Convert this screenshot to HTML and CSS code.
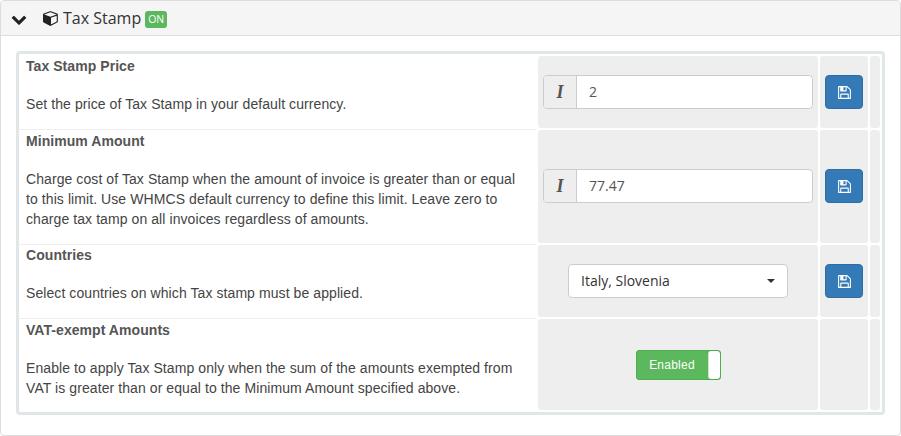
FILE: index.html
```html
<!DOCTYPE html>
<html lang="en">
<head>
<meta charset="utf-8">
<title>Tax Stamp</title>
<link rel="stylesheet" href="styles.css">
</head>
<body>
<section class="panel">
  <header class="panel-heading">
    <svg class="chevron" viewBox="0 0 1792 1792"><path d="M1683 808l-742 741q-19 19-45 19t-45-19l-742-741q-19-19-19-45.500t19-45.500l166-165q19-19 45-19t45 19l531 531 531-531q19-19 45-19t45 19l166 165q19 19 19 45.500t-19 45.500z"/></svg>
    <svg class="cube" viewBox="0 0 1792 1792"><path d="M896 1629l640-349v-636l-640 233v752zm-64-865l698-254-698-254-698 254zm832-252v768q0 35-18 65t-49 47l-704 384q-28 16-61 16t-61-16l-704-384q-31-17-49-47t-18-65v-768q0-40 23-73t61-47l704-256q22-8 44-8t44 8l704 256q38 14 61 47t23 73z"/></svg>
    <span class="panel-title">Tax Stamp</span>
    <span class="badge">ON</span>
  </header>
  <div class="panel-body">
    <div class="settings">
      <div class="info">
        <h4>Tax Stamp Price</h4>
        <p>Set the price of Tax Stamp in your default currency.</p>
      </div>
      <div class="cell">
        <div class="input-group"><span class="addon">I</span><span class="field">2</span></div>
      </div>
      <div class="cell">
        <button class="save" type="button"><svg class="save-icon" viewBox="0 0 1792 1792"><path d="M512 1536h768v-384h-768v384zm896 0h128v-896q0-14-10-38.500t-20-34.500l-281-281q-10-10-34-20t-39-10v416q0 40-28 68t-68 28h-576q-40 0-68-28t-28-68v-416h-128v1280h128v-416q0-40 28-68t68-28h832q40 0 68 28t28 68v416zm-384-928v-320q0-13-9.500-22.500t-22.500-9.500h-192q-13 0-22.500 9.500t-9.500 22.500v320q0 13 9.500 22.500t22.500 9.500h192q13 0 22.500-9.500t9.500-22.500zm640 32v928q0 40-28 68t-68 28h-1344q-40 0-68-28t-28-68v-1344q0-40 28-68t68-28h928q40 0 88 20t76 48l280 280q28 28 48 76t20 88z"/></svg></button>
      </div>
      <div class="cell"></div>

      <div class="info info-tall">
        <h4>Minimum Amount</h4>
        <p>Charge cost of Tax Stamp when the amount of invoice is greater than or equal to this limit. Use WHMCS default currency to define this limit. Leave zero to charge tax tamp on all invoices regardless of amounts.</p>
      </div>
      <div class="cell cell-raised">
        <div class="input-group"><span class="addon">I</span><span class="field">77.47</span></div>
      </div>
      <div class="cell cell-raised">
        <button class="save" type="button"><svg class="save-icon" viewBox="0 0 1792 1792"><path d="M512 1536h768v-384h-768v384zm896 0h128v-896q0-14-10-38.500t-20-34.500l-281-281q-10-10-34-20t-39-10v416q0 40-28 68t-68 28h-576q-40 0-68-28t-28-68v-416h-128v1280h128v-416q0-40 28-68t68-28h832q40 0 68 28t28 68v416zm-384-928v-320q0-13-9.500-22.500t-22.500-9.500h-192q-13 0-22.500 9.500t-9.500 22.500v320q0 13 9.500 22.500t22.500 9.500h192q13 0 22.500-9.500t9.500-22.500zm640 32v928q0 40-28 68t-68 28h-1344q-40 0-68-28t-28-68v-1344q0-40 28-68t68-28h928q40 0 88 20t76 48l280 280q28 28 48 76t20 88z"/></svg></button>
      </div>
      <div class="cell"></div>

      <div class="info">
        <h4>Countries</h4>
        <p>Select countries on which Tax stamp must be applied.</p>
      </div>
      <div class="cell">
        <div class="select"><span>Italy, Slovenia</span><i class="caret"></i></div>
      </div>
      <div class="cell">
        <button class="save" type="button"><svg class="save-icon" viewBox="0 0 1792 1792"><path d="M512 1536h768v-384h-768v384zm896 0h128v-896q0-14-10-38.500t-20-34.500l-281-281q-10-10-34-20t-39-10v416q0 40-28 68t-68 28h-576q-40 0-68-28t-28-68v-416h-128v1280h128v-416q0-40 28-68t68-28h832q40 0 68 28t28 68v416zm-384-928v-320q0-13-9.500-22.500t-22.500-9.500h-192q-13 0-22.500 9.500t-9.500 22.500v320q0 13 9.500 22.500t22.500 9.500h192q13 0 22.500-9.500t9.500-22.500zm640 32v928q0 40-28 68t-68 28h-1344q-40 0-68-28t-28-68v-1344q0-40 28-68t68-28h928q40 0 88 20t76 48l280 280q28 28 48 76t20 88z"/></svg></button>
      </div>
      <div class="cell"></div>

      <div class="info info-tall info-last">
        <h4>VAT-exempt Amounts</h4>
        <p>Enable to apply Tax Stamp only when the sum of the amounts exempted from VAT is greater than or equal to the Minimum Amount specified above.</p>
      </div>
      <div class="cell">
        <div class="toggle"><span class="toggle-label">Enabled</span><span class="toggle-handle"></span></div>
      </div>
      <div class="cell"></div>
      <div class="cell"></div>
    </div>
  </div>
</section>
</body>
</html>
```
FILE: styles.css
```css
* { box-sizing: border-box; }
html, body { margin: 0; padding: 0; background: #fff; }
body { font-family: "Liberation Sans", Arial, sans-serif; font-size: 14px; line-height: 20px; color: #444; }

.panel { width: 901px; height: 436px; border: 1px solid #ddd; border-radius: 4px; overflow: hidden; }
.panel-heading { height: 35px; display: flex; align-items: center; background: #f5f5f5; border-bottom: 1px solid #ddd; padding-left: 10px; color: #333; }
.chevron { width: 16px; height: 16px; fill: #222; margin-top: 1px; }
.cube { width: 16px; height: 16px; fill: #222; margin-left: 16px; }
.panel-title { font-family: "Open Sans", sans-serif; font-size: 16px; margin-left: 4px; }
.badge { font-family: "Open Sans", sans-serif; font-size: 10.500px; line-height: 17px; height: 17px; width: 22px; text-align: center; margin-left: 4px; margin-top: 2px; color: #fff; background: #5cb85c; border-radius: 3px; }

.panel-body { padding: 15px; }
.settings { border: 3px solid #e1e6e8; border-radius: 4px; padding: 2px 2px 2px 0; display: grid; grid-template-columns: 517px 280px 48px 10px; gap: 2px; }

.info { padding: 0 5px 15px 7px; margin-bottom: -2px; border-bottom: 1px solid #eee; }
.info-tall { padding-top: 1px; }
.info-last { border-bottom: 0; margin-bottom: 0; padding-bottom: 12px; }
.info h4 { margin: 0 0 18px; font-size: 14px; line-height: 20px; font-weight: 700; color: #555; letter-spacing: 0.06px; }
.info p { margin: 0; max-width: 495px; letter-spacing: 0.08px; }

.cell { background: #eee; border-radius: 3px; display: flex; align-items: center; justify-content: center; }
.cell-raised { padding-bottom: 1px; }

.input-group { width: 270px; height: 34px; display: flex; background: #fff; border: 1px solid #ccc; border-radius: 4px; overflow: hidden; font-family: "Open Sans", sans-serif; color: #555; }
.addon { width: 33px; background: #eee; border-right: 1px solid #ccc; text-align: center; line-height: 32px; font-family: "Liberation Serif", serif; font-style: italic; font-weight: 700; font-size: 18px; color: #555; }
.field { padding-left: 12px; line-height: 32px; font-size: 14px; }

.save { width: 38px; height: 34px; padding: 0; display: flex; align-items: center; justify-content: center; background: #337ab7; border: 1px solid #2e6da4; border-radius: 4px; }
.save-icon { width: 15px; height: 15px; fill: #fff; }

.select { width: 220px; height: 34px; display: flex; align-items: center; justify-content: space-between; padding: 0 12px; background: #fff; border: 1px solid #ccc; border-radius: 4px; font-family: "Open Sans", sans-serif; color: #333; }
.caret { width: 0; height: 0; border-top: 4px solid #333; border-left: 4px solid transparent; border-right: 4px solid transparent; }

.toggle { width: 85px; height: 30px; display: flex; background: #5cb85c; border: 1px solid #4cae4c; border-radius: 3px; overflow: hidden; }
.toggle-label { flex: 1; text-align: center; color: #fff; font-size: 12px; line-height: 28px; letter-spacing: 0.02em; }
.toggle-handle { width: 12px; background: #fff; border-left: 1px solid #ddd; border-radius: 3px; }
```
